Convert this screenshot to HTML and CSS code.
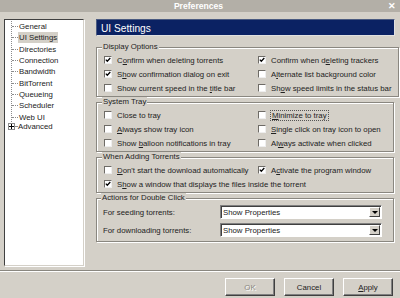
FILE: index.html
```html
<!DOCTYPE html>
<html lang="en">
<head>
    <meta charset="UTF-8">
    <title>Preferences</title>
    <link rel="stylesheet" href="styles.css">
</head>
<body>
    <div class="window">
        <div class="titlebar">
            <span class="title">Preferences</span>
            <span class="close">&#10005;</span>
        </div>

        <div class="panes">
            <div class="tree">
                <ul>
                    <li><span class="twig"></span><span class="node">General</span></li>
                    <li><span class="twig"></span><span class="node selected">UI Settings</span></li>
                    <li><span class="twig"></span><span class="node">Directories</span></li>
                    <li><span class="twig"></span><span class="node">Connection</span></li>
                    <li><span class="twig"></span><span class="node">Bandwidth</span></li>
                    <li><span class="twig"></span><span class="node">BitTorrent</span></li>
                    <li><span class="twig"></span><span class="node">Queueing</span></li>
                    <li><span class="twig"></span><span class="node">Scheduler</span></li>
                    <li><span class="twig"></span><span class="node">Web UI</span></li>
                    <li class="last">
                        <span class="expander">
                            <svg width="5" height="5" viewBox="0 0 5 5"><path d="M0 2.5h5M2.5 0v5" stroke="#000" stroke-width="1"/></svg>
                        </span>
                        <span class="twig short"></span><span class="node">Advanced</span>
                    </li>
                </ul>
            </div>

            <div class="settings">
                <div class="heading">UI Settings</div>

                <fieldset class="group">
                    <legend>Display Options</legend>
                    <div class="grid">
                        <label class="check"><span class="box on"></span><span>C<u>o</u>nfirm when deleting torrents</span></label>
                        <label class="check"><span class="box on"></span><span>Confirm when d<u>e</u>leting trackers</span></label>
                        <label class="check"><span class="box on"></span><span>S<u>h</u>ow confirmation dialog on exit</span></label>
                        <label class="check"><span class="box"></span><span>A<u>l</u>ternate list background color</span></label>
                        <label class="check"><span class="box"></span><span>Show current speed in the <u>t</u>itle bar</span></label>
                        <label class="check"><span class="box"></span><span>Sh<u>o</u>w speed limits in the status bar</span></label>
                    </div>
                </fieldset>

                <fieldset class="group">
                    <legend>System Tray</legend>
                    <div class="grid">
                        <label class="check"><span class="box"></span><span>Close to tray</span></label>
                        <label class="check"><span class="box"></span><span class="focus"><u>M</u>inimize to tray</span></label>
                        <label class="check"><span class="box"></span><span><u>A</u>lways show tray icon</span></label>
                        <label class="check"><span class="box"></span><span><u>S</u>ingle click on tray icon to open</span></label>
                        <label class="check"><span class="box"></span><span>Show <u>b</u>alloon notifications in tray</span></label>
                        <label class="check"><span class="box"></span><span>Al<u>w</u>ays activate when clicked</span></label>
                    </div>
                </fieldset>

                <fieldset class="group">
                    <legend>When Adding Torrents</legend>
                    <div class="grid">
                        <label class="check"><span class="box"></span><span><u>D</u>on't start the download automatically</span></label>
                        <label class="check"><span class="box on"></span><span>A<u>c</u>tivate the program window</span></label>
                        <label class="check wide"><span class="box on"></span><span>S<u>h</u>ow a window that displays the files inside the torrent</span></label>
                    </div>
                </fieldset>

                <fieldset class="group actions">
                    <legend>Actions for Double Click</legend>
                    <div class="pick-row">
                        <span>For seeding torrents:</span>
                        <div class="select"><span>Show Properties</span><span class="drop"></span></div>
                    </div>
                    <div class="pick-row">
                        <span>For downloading torrents:</span>
                        <div class="select"><span>Show Properties</span><span class="drop"></span></div>
                    </div>
                </fieldset>
            </div>
        </div>

        <div class="footer">
            <button class="btn disabled">OK</button>
            <button class="btn">Cancel</button>
            <button class="btn"><u>A</u>pply</button>
        </div>
    </div>
</body>
</html>
```

FILE: styles.css
```css
* {
    margin: 0;
    padding: 0;
    box-sizing: border-box;
}

html, body {
    width: 400px;
    height: 298px;
    overflow: hidden;
}

body {
    background: #d4d0c8;
    font-family: "Liberation Sans", Arial, sans-serif;
    font-size: 7.8px;
    color: #222;
}

.titlebar {
    height: 12px;
    background: #b3afa7;
    color: #fff;
    display: flex;
    align-items: center;
    padding: 0 4px 0 0;
}

.title {
    flex: 1;
    text-align: center;
    font-weight: bold;
    font-size: 8.6px;
    padding-left: 3px;
    margin-right: -6px;
}

.close {
    font-size: 9px;
    font-weight: bold;
}

.panes {
    display: flex;
    padding: 7px 5px 0 4px;
}

/* tree on the left */
.tree {
    width: 80px;
    height: 247px;
    background: #fff;
    border: 1px solid;
    border-color: #404040 #d4d0c8 #d4d0c8 #404040;
    box-shadow: 1px 1px 0 #fff;
    padding: 1px 0 0 6px;
}

.tree ul {
    list-style: none;
    border-left: 1px dotted #8c8c8c;
    margin-top: 4px;
}

.tree li {
    display: flex;
    align-items: center;
    height: 11.33px;
    margin-top: -4px;
    margin-bottom: 4px;
}

.tree li.last {
    margin-bottom: 0;
    height: 7px;
    align-items: flex-end;
}

.twig {
    width: 6px;
    border-top: 1px dotted #8c8c8c;
}

.twig.short {
    width: 2px;
    margin-bottom: 3px;
}

.node {
    padding: 0 1px;
    line-height: 11px;
}

.last .node {
    margin-bottom: -2px;
}

.node.selected {
    background: #d4d0c8;
}

.expander {
    width: 7px;
    height: 7px;
    margin-left: -4px;
    margin-bottom: 0;
    border: 1px solid #8c8c8c;
    background: #fff;
    display: flex;
    align-items: center;
    justify-content: center;
}

.expander svg {
    display: block;
}

/* right side */
.settings {
    width: 299px;
    margin-left: 12px;
}

.heading {
    height: 17px;
    background: #0b2263;
    color: #fff;
    font-size: 10.2px;
    line-height: 17px;
    padding-left: 4px;
    border: 1px solid;
    border-color: #4a5a80 #e0e0e0 #e0e0e0 #4a5a80;
}

.group {
    border: 1px solid #8a8780;
    box-shadow: inset 1px 1px 0 #fff, 1px 1px 0 #fff;
    padding: 1px 6px 1px 7px;
    width: 298px;
}

.heading + .group {
    margin-top: 6px;
}

.group legend {
    line-height: 10px;
    padding: 0 1px;
    margin-left: -2px;
    background: #d4d0c8;
}

.grid {
    display: grid;
    grid-template-columns: 154px 1fr;
}

.check {
    display: flex;
    align-items: center;
    height: 14px;
    white-space: nowrap;
}

.check.wide {
    grid-column: 1 / 3;
}

.box {
    width: 8px;
    height: 8px;
    margin-right: 5px;
    background: #fff;
    border: 1px solid;
    border-color: #6e6b66 #eeeeee #eeeeee #6e6b66;
    flex-shrink: 0;
}

.box.on {
    background: #fff url("data:image/svg+xml,%3Csvg xmlns='http://www.w3.org/2000/svg' width='6' height='6' viewBox='0 0 6 6'%3E%3Cpath d='M0.8 2.6 L2.3 4.2 L5.3 1' fill='none' stroke='%23000' stroke-width='1.3'/%3E%3C/svg%3E") no-repeat center;
}

.focus {
    outline: 1px dotted #555;
    padding: 0 1px;
}

.actions {
    padding: 2px 6px 4px 6px;
}

.pick-row {
    display: grid;
    grid-template-columns: 117px 162px;
    align-items: center;
    height: 14px;
}

.pick-row + .pick-row {
    margin-top: 4px;
}

.select {
    height: 14px;
    background: #fff;
    border: 1px solid;
    border-color: #808080 #fff #fff #808080;
    box-shadow: inset 1px 1px 0 #404040;
    display: flex;
    align-items: center;
    justify-content: space-between;
    padding: 1px 1px 1px 2px;
}

.drop {
    width: 11px;
    height: 10px;
    background: #d4d0c8;
    border: 1px solid;
    border-color: #fff #404040 #404040 #fff;
    display: flex;
    align-items: center;
    justify-content: center;
}

.drop::after {
    content: "";
    border-left: 3px solid transparent;
    border-right: 3px solid transparent;
    border-top: 3px solid #000;
}

/* buttons */
.footer {
    margin-top: 4px;
    border-top: 1px solid #8a8780;
    box-shadow: inset 0 1px 0 #fff;
    display: flex;
    justify-content: flex-end;
    gap: 9px;
    padding: 7px 7px 0 0;
}

.btn {
    width: 50px;
    height: 18px;
    background: #d4d0c8;
    font: inherit;
    color: #222;
    border: 1px solid;
    border-color: #fff #404040 #404040 #fff;
    box-shadow: inset -1px -1px 0 #808080;
}

.btn.disabled {
    color: #8a8780;
    text-shadow: 1px 1px 0 #fff;
}
```
